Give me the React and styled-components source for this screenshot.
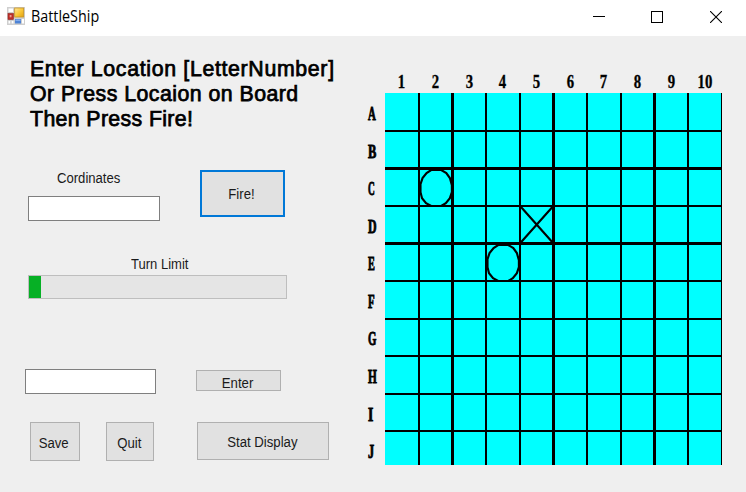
import React from "react";
import styled, { createGlobalStyle } from "styled-components";

const GlobalStyle = createGlobalStyle`
  * { box-sizing: border-box; }
  body { margin: 0; background: #efefef; overflow: hidden; }
`;

const Window = styled.div`
  width: 746px;
  height: 492px;
  background: #efefef;
  color: #000;
  font-family: "Liberation Sans", Arial, sans-serif;
`;

const TitleBar = styled.header`
  display: flex;
  align-items: center;
  height: 36px;
  padding: 0 0 4px 7px;
  background: #fff;
`;

const Title = styled.h1`
  flex: 1;
  margin: 0 0 0 6px;
  font: 400 15.5px/20px "Open Sans", "Noto Sans", sans-serif;
`;

const TitleText = styled.span`
  display: inline-block;
  transform: scaleX(${(p) => p.$scale});
  transform-origin: left;
`;

const Controls = styled.div`
  display: flex;
  padding: 2px 1px 0 0;
`;

const ControlButton = styled.button`
  display: flex;
  align-items: center;
  justify-content: center;
  width: 58.5px;
  height: 30px;
  padding: 0;
  border: 0;
  background: none;
`;

const Content = styled.main`
  display: flex;
  height: 456px;
`;

const Panel = styled.section`
  display: flex;
  flex-direction: column;
  width: 361px;
`;

const Instructions = styled.div`
  height: 134px;
  padding: 21px 0 0 30px;
  font-size: 21.3px;
  line-height: 25px;
  white-space: nowrap;
  -webkit-text-stroke: 0.75px #000;
`;

const Line = styled.div`
  letter-spacing: ${(p) => p.$spacing}px;
`;

const Row = styled.div`
  display: flex;
  align-items: flex-start;
  gap: ${(p) => p.$gap}px;
  height: ${(p) => p.$height}px;
  padding-left: ${(p) => p.$left}px;
`;

const Field = styled.div`
  display: flex;
  flex-direction: column;
`;

const Label = styled.label`
  display: block;
  height: ${(p) => p.$height}px;
  padding-left: ${(p) => p.$indent}px;
  line-height: 15px;
  font-size: 15.5px;
  color: #1a1a1a;
  white-space: nowrap;
`;

const Narrow = styled.span`
  display: inline-block;
  transform: scaleX(${(p) => p.$scale || 0.85});
  transform-origin: ${(p) => p.$origin || "center"};
`;

const TextBox = styled.input`
  width: ${(p) => p.$width}px;
  height: 25px;
  border: 1px solid #7f7f7f;
  background: #fff;
  outline: 0;
`;

const Button = styled.button`
  display: flex;
  align-items: center;
  justify-content: center;
  width: ${(p) => p.$width}px;
  height: ${(p) => p.$height}px;
  margin: ${(p) => p.$top || 0}px 0 0 ${(p) => p.$left || 0}px;
  padding: ${(p) => p.$drop || 0}px 2px 0 0;
  border: ${(p) => (p.$primary ? "2px solid #0078d7" : "1px solid #b0b0b0")};
  background: #e1e1e1;
  color: #1a1a1a;
  font: 15.5px/16px "Liberation Sans", Arial, sans-serif;
  white-space: nowrap;
`;

const ProgressTrack = styled.div`
  width: 259px;
  height: 24px;
  border: 1px solid #bebebe;
  background: #e5e5e5;
`;

const ProgressFill = styled.div`
  width: 12px;
  height: 100%;
  background: #06b025;
`;

const BoardArea = styled.section`
  display: grid;
  grid-template-columns: 24px 337px;
  grid-template-rows: 57.4px 371.6px;
`;

const ColumnLabels = styled.div`
  grid-column: 2;
  display: grid;
  grid-template-columns: repeat(10, 33.7px);
  align-items: end;
  padding-bottom: 1px;
`;

const RowLabels = styled.div`
  display: grid;
  grid-template-rows: repeat(10, 37.56px);
  align-items: center;
  padding-top: 2px;
`;

const AxisText = styled.span`
  text-align: ${(p) => (p.$row ? "left" : "center")};
  padding-left: ${(p) => (p.$row ? 7 : 0)}px;
  font: 700 18px/20px "Liberation Serif", "Times New Roman", serif;
  -webkit-text-stroke: ${(p) => (p.$row ? 0.9 : 0.3)}px #000;
  white-space: nowrap;
`;

const Board = styled.div`
  display: grid;
  grid-template-columns: 32.55px repeat(9, 31.4px);
  grid-template-rows: 36.4px repeat(8, 35.26px) 33px;
  gap: 2.3px;
  width: 337px;
  height: 371.6px;
  overflow: hidden;
  background: #000;
`;

const Cell = styled.div`
  background: #00ffff;
`;

const MarkSvg = styled.svg`
  display: block;
  width: 100%;
  height: 100%;
  overflow: visible;
  fill: none;
  stroke: #000;
  stroke-width: 2.1px;
`;

const columns = ["1", "2", "3", "4", "5", "6", "7", "8", "9", "10"];
const rows = [
  ["A", 0.6], ["B", 0.69], ["C", 0.52], ["D", 0.66], ["E", 0.57],
  ["F", 0.6], ["G", 0.6], ["H", 0.63], ["I", 0.75], ["J", 0.68],
];
const marks = { C2: "miss", D5: "hit", E4: "miss" };

function AppIcon() {
  return (
    <svg width="18" height="18" viewBox="0 0 18 18">
      <defs>
        <linearGradient id="gold" x1="0" y1="0" x2="1" y2="1">
          <stop offset="0" stopColor="#ffe9a0" />
          <stop offset=".5" stopColor="#fbc93a" />
          <stop offset="1" stopColor="#e0a010" />
        </linearGradient>
      </defs>
      <rect width="18" height="18" fill="#cfcfcf" />
      <path d="M1.5 1.5h4.5v3.5h-4.5zM1.5 14h1.7v2.5h-1.7zM4.7 14h1.8v2.5h-1.8zM15 12h2v4.5h-2z" fill="#fff" />
      <rect x="7.7" y="1" width="9" height="9" fill="url(#gold)" stroke="#c79322" strokeWidth=".8" />
      <rect x="1" y="6.5" width="5.4" height="6" fill="#bd2e28" stroke="#942620" strokeWidth=".6" />
      <rect x="2.7" y="8" width="1.8" height="2.3" fill="#ee9b91" />
      <rect x="8" y="12" width="6" height="4.5" fill="#4e83d6" />
      <path d="M8.5 12.5h5v1.5h-5z" fill="#83aceb" />
    </svg>
  );
}

function Mark({ type }) {
  if (type === "hit") {
    return (
      <MarkSvg viewBox="0 0 31 35" preserveAspectRatio="none">
        <path d="M0 0L31 35M31 0L0 35" />
      </MarkSvg>
    );
  }
  return (
    <MarkSvg viewBox="0 0 31 35" preserveAspectRatio="none">
      <path d="M11 0h10l5 3 3.5 5 2 7v7l-2 6-4 5-5 3h-9l-5.5-3-4-5-1.5-6v-8l2-6 4-5z" />
      <path d="M31 18h3.5" />
    </MarkSvg>
  );
}

export default function App() {
  return (
    <Window>
      <GlobalStyle />
      <TitleBar>
        <AppIcon />
        <Title><TitleText $scale={0.925}>BattleShip</TitleText></Title>
        <Controls>
          <ControlButton aria-label="Minimize">
            <svg width="12" height="12"><path d="M0 5.5h12" stroke="#000" /></svg>
          </ControlButton>
          <ControlButton aria-label="Maximize">
            <svg width="12" height="12"><rect x=".5" y=".5" width="11" height="11" fill="none" stroke="#000" /></svg>
          </ControlButton>
          <ControlButton aria-label="Close">
            <svg width="12" height="12"><path d="M0 0L12 12M12 0L0 12" stroke="#000" strokeWidth="1.1" /></svg>
          </ControlButton>
        </Controls>
      </TitleBar>
      <Content>
        <Panel>
          <Instructions>
            <Line $spacing={0.67}>Enter Location [LetterNumber]</Line>
            <Line $spacing={0.47}>Or Press Locaion on Board</Line>
            <Line $spacing={0.37}>Then Press Fire!</Line>
          </Instructions>
          <Row $left={28} $gap={40} $height={86}>
            <Field>
              <Label $height={26} $indent={29}><Narrow $scale={0.845} $origin="left">Cordinates</Narrow></Label>
              <TextBox $width={132} aria-label="Cordinates" />
            </Field>
            <Button $primary $width={85} $height={47}><Narrow>Fire!</Narrow></Button>
          </Row>
          <Row $left={28} $gap={0} $height={113}>
            <Field>
              <Label $height={19} $indent={103}><Narrow $scale={0.84} $origin="left">Turn Limit</Narrow></Label>
              <ProgressTrack><ProgressFill /></ProgressTrack>
            </Field>
          </Row>
          <Row $left={25} $gap={40} $height={53}>
            <TextBox $width={131} aria-label="Entry" />
            <Button $width={85} $height={21} $top={1} $drop={4}><Narrow>Enter</Narrow></Button>
          </Row>
          <Row $left={30} $gap={26} $height={40}>
            <Button $width={50} $height={39} $drop={3}><Narrow>Save</Narrow></Button>
            <Button $width={48} $height={39} $drop={3}><Narrow>Quit</Narrow></Button>
            <Button $width={132} $height={38} $left={17} $drop={2}><Narrow>Stat Display</Narrow></Button>
          </Row>
        </Panel>
        <BoardArea>
          <ColumnLabels>
            {columns.map((c) => (
              <AxisText key={c}><Narrow $scale={0.82}>{c}</Narrow></AxisText>
            ))}
          </ColumnLabels>
          <RowLabels>
            {rows.map(([r, scale]) => (
              <AxisText key={r} $row><Narrow $scale={scale} $origin="left">{r}</Narrow></AxisText>
            ))}
          </RowLabels>
          <Board>
            {rows.flatMap(([r]) =>
              columns.map((c) => (
                <Cell key={r + c}>{marks[r + c] && <Mark type={marks[r + c]} />}</Cell>
              ))
            )}
          </Board>
        </BoardArea>
      </Content>
    </Window>
  );
}
